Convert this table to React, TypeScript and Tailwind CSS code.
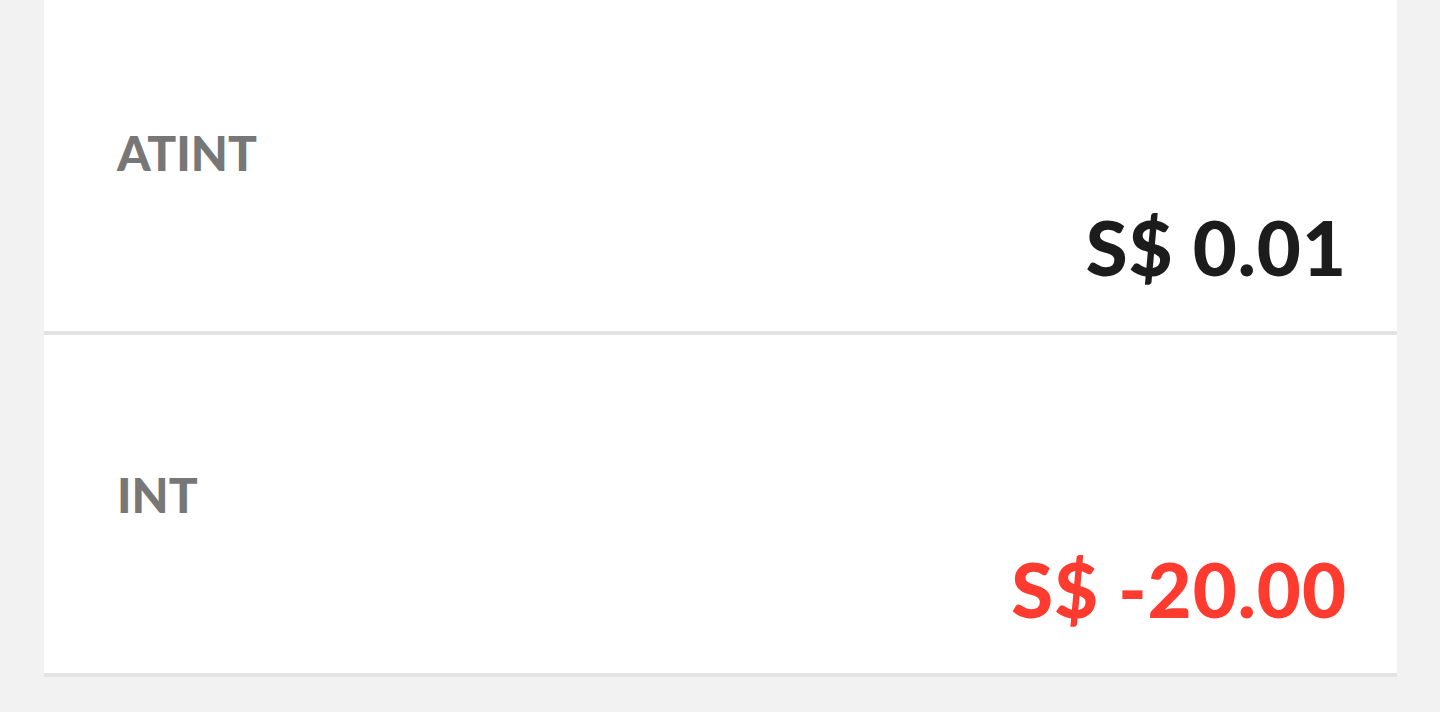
const rows = [
  { label: 'ATINT', amount: 'S$ 0.01', negative: false },
  { label: 'INT', amount: 'S$ -20.00', negative: true },
];

function BalanceRow({ label, amount, negative, first }: { label: string; amount: string; negative: boolean; first?: boolean }) {
  return (
    <div
      className={`flex flex-col border-b-4 border-[#e3e3e3] bg-white pl-[73px] pr-[50px] ${first ? 'h-[335px] pt-[129px]' : 'h-[342px] pt-[136px]'}`}
    >
      <span className="text-[48px] leading-[48px] font-black text-[#777777]">{label}</span>
      <span
        className={`mt-[32px] self-end text-[76px] leading-[76px] font-black tracking-[1px] ${negative ? 'text-[#ff3b30]' : 'text-[#1c1c1c]'}`}
      >
        {amount}
      </span>
    </div>
  );
}

export default function App() {
  return (
    <div className="min-h-[712px] bg-[#f2f2f2] px-[44px]" style={{ fontFamily: 'Lato, "Open Sans", sans-serif' }}>
      <div className="w-[1353px]">
        {rows.map((r, i) => (
          <BalanceRow key={r.label} {...r} first={i === 0} />
        ))}
      </div>
    </div>
  );
}
